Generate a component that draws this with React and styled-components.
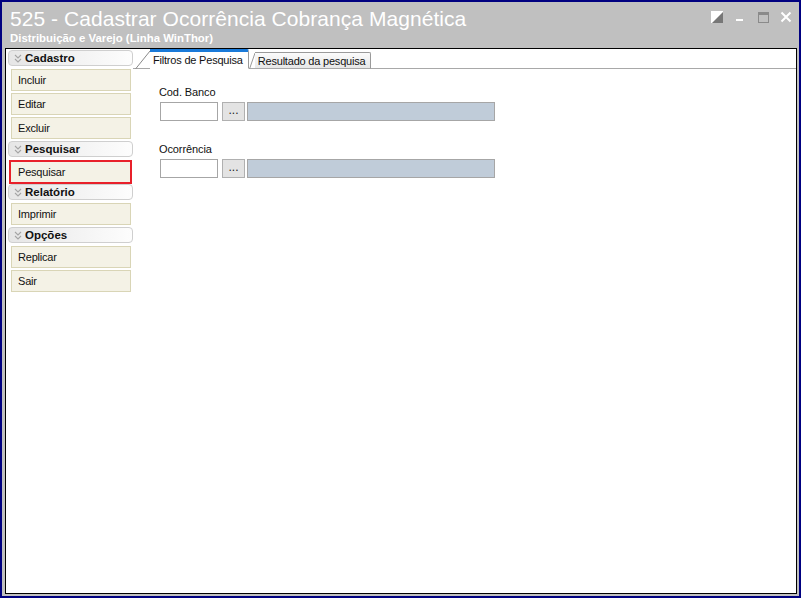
import React from 'react';
import styled, { createGlobalStyle } from 'styled-components';

const GlobalStyle = createGlobalStyle`
    html, body {
        margin: 0;
        padding: 0;
        background: #c0c0c0;
    }
    * { box-sizing: border-box; }
`;

const Window = styled.div`
    width: 801px;
    height: 598px;
    border: 2px solid #000080;
    background: #c0c0c0;
    display: flex;
    flex-direction: column;
    padding: 0 2px 2px 3px;
    font-family: "Liberation Sans", Arial, sans-serif;
`;

const TitleBar = styled.div`
    height: 46px;
    display: flex;
    justify-content: space-between;
    padding: 4px 0 0 5px;
`;

const TitleText = styled.div`
    display: flex;
    flex-direction: column;
    color: #fff;
`;

const Title = styled.div`
    font-size: 21px;
    line-height: 25px;
    letter-spacing: 0.05px;
`;

const Subtitle = styled.div`
    font-size: 11.4px;
    font-weight: bold;
    line-height: 13px;
    margin-top: 1px;
`;

const Controls = styled.div`
    display: flex;
    gap: 11px;
    padding: 5px 5px 0 0;
    height: 20px;
`;

const Content = styled.div`
    flex: 1;
    display: flex;
    background: #fff;
    border: 1px solid #000;
`;

const Sidebar = styled.div`
    width: 127px;
    padding: 1px 0 0 2px;
    display: flex;
    flex-direction: column;
`;

const GroupHeader = styled.div`
    height: 16px;
    display: flex;
    align-items: center;
    gap: 3px;
    padding-left: 5px;
    border: 1px solid #cfcfcf;
    border-radius: 4px;
    background: linear-gradient(to right, #e6e6e6 0%, #f4f4f4 60%, #fdfdfd 100%);
    font-weight: bold;
    font-size: 11.5px;
    color: #111;
    margin-bottom: 3px;
`;

const ActionButton = styled.div`
    height: ${p => (p.$highlight ? '24px' : '22px')};
    margin: ${p => (p.$highlight ? '0 1px 0 1px' : '0 2px 2px 3px')};
    display: flex;
    align-items: center;
    background: #f4f2e6;
    border: ${p => (p.$highlight ? '2px solid #e8202a' : '1px solid #d9d5b6')};
    padding-left: ${p => (p.$highlight ? '7px' : '6px')};
    font-size: 11px;
    letter-spacing: -0.2px;
    color: #111;
`;

const Main = styled.div`
    flex: 1;
    display: flex;
    flex-direction: column;
`;

const TabStrip = styled.div`
    height: 20px;
    display: flex;
    align-items: flex-end;
    border-bottom: 1px solid #a8a8a8;
    padding-left: 2px;
`;

const Slant = styled.svg`
    display: block;
    flex: none;
    margin-bottom: -1px;
`;

const Tab = styled.div`
    height: ${p => (p.$active ? '20px' : '17px')};
    display: flex;
    align-items: center;
    padding: 0 5px 0 3px;
    font-size: 11px;
    letter-spacing: -0.2px;
    color: #111;
    margin-bottom: -1px;
    background: ${p => (p.$active ? '#fff' : 'linear-gradient(#fbfbfb, #e7e7e7)')};
    border-top: ${p => (p.$active ? '3px solid #1a7ad9' : '1px solid #9a9a9a')};
    border-right: 1px solid #9a9a9a;
    border-bottom: ${p => (p.$active ? '1px solid #fff' : '1px solid #a8a8a8')};
    border-top-right-radius: 2px;
`;

const Form = styled.div`
    padding: 16px 0 0 26px;
    display: flex;
    flex-direction: column;
`;

const FieldLabel = styled.div`
    font-size: 11px;
    letter-spacing: -0.1px;
    line-height: 14px;
    color: #111;
    margin-bottom: 3px;
`;

const FieldRow = styled.div`
    display: flex;
    align-items: center;
    height: 19px;
    margin-bottom: 21px;
`;

const CodeInput = styled.div`
    width: 58px;
    height: 19px;
    border: 1px solid #a6a6a6;
    background: #fff;
    margin-left: 1px;
`;

const DotsButton = styled.div`
    width: 23px;
    height: 19px;
    margin-left: 4px;
    border: 1px solid #b0b0b0;
    background: #e3e3e3;
    font-size: 12px;
    line-height: 14px;
    text-align: center;
    color: #222;
`;

const DescField = styled.div`
    width: 248px;
    height: 19px;
    margin-left: 2px;
    border: 1px solid #a6a6a6;
    background: #c0ccd9;
`;

const Chevron = () => (
    <svg width="8" height="9" viewBox="0 0 8 9">
        <path d="M1 1 L4 4 L7 1 M1 5 L4 8 L7 5" fill="none" stroke="#a4a4a4" strokeWidth="1.1" />
    </svg>
);

const Group = ({ title, items, highlight }) => (
    <>
        <GroupHeader>
            <Chevron />
            {title}
        </GroupHeader>
        {items.map(item => (
            <ActionButton key={item} $highlight={item === highlight}>{item}</ActionButton>
        ))}
    </>
);

const Field = ({ label }) => (
    <>
        <FieldLabel>{label}</FieldLabel>
        <FieldRow>
            <CodeInput />
            <DotsButton>...</DotsButton>
            <DescField />
        </FieldRow>
    </>
);

export default function App() {
    return (
        <>
            <GlobalStyle />
            <Window>
                <TitleBar>
                    <TitleText>
                        <Title>525 - Cadastrar Ocorrência Cobrança Magnética</Title>
                        <Subtitle>Distribuição e Varejo (Linha WinThor)</Subtitle>
                    </TitleText>
                    <Controls>
                        <svg width="12" height="12" viewBox="0 0 12 12">
                            <rect x="0" y="0" width="12" height="12" fill="#fff" />
                            <path d="M12 1 L12 12 L1 12 Z" fill="#777" />
                        </svg>
                        <svg width="12" height="12" viewBox="0 0 12 12">
                            <rect x="2" y="8" width="7" height="2" fill="#fff" />
                        </svg>
                        <svg width="12" height="12" viewBox="0 0 12 12">
                            <rect x="1.5" y="1.5" width="10" height="10" fill="none" stroke="#8a8a8a" strokeWidth="1" />
                            <rect x="1" y="1" width="11" height="3" fill="#8a8a8a" />
                        </svg>
                        <svg width="12" height="12" viewBox="0 0 12 12">
                            <path d="M1.5 1.5 L10.5 10.5 M10.5 1.5 L1.5 10.5" stroke="#fff" strokeWidth="2" />
                        </svg>
                    </Controls>
                </TitleBar>
                <Content>
                    <Sidebar>
                        <Group title="Cadastro" items={['Incluir', 'Editar', 'Excluir']} />
                        <Group title="Pesquisar" items={['Pesquisar']} highlight="Pesquisar" />
                        <Group title="Relatório" items={['Imprimir']} />
                        <Group title="Opções" items={['Replicar', 'Sair']} />
                    </Sidebar>
                    <Main>
                        <TabStrip>
                            <Slant width="15" height="20" viewBox="0 0 15 20">
                                <path d="M0.5 20 L15 2" stroke="#8a8a8a" strokeWidth="1" fill="none" />
                            </Slant>
                            <Tab $active>Filtros de Pesquisa</Tab>
                            <Slant width="6" height="17" viewBox="0 0 6 17">
                                <path d="M0.5 17 L6 1" stroke="#9a9a9a" strokeWidth="1" fill="none" />
                            </Slant>
                            <Tab>Resultado da pesquisa</Tab>
                        </TabStrip>
                        <Form>
                            <Field label="Cod. Banco" />
                            <Field label="Ocorrência" />
                        </Form>
                    </Main>
                </Content>
            </Window>
        </>
    );
}
